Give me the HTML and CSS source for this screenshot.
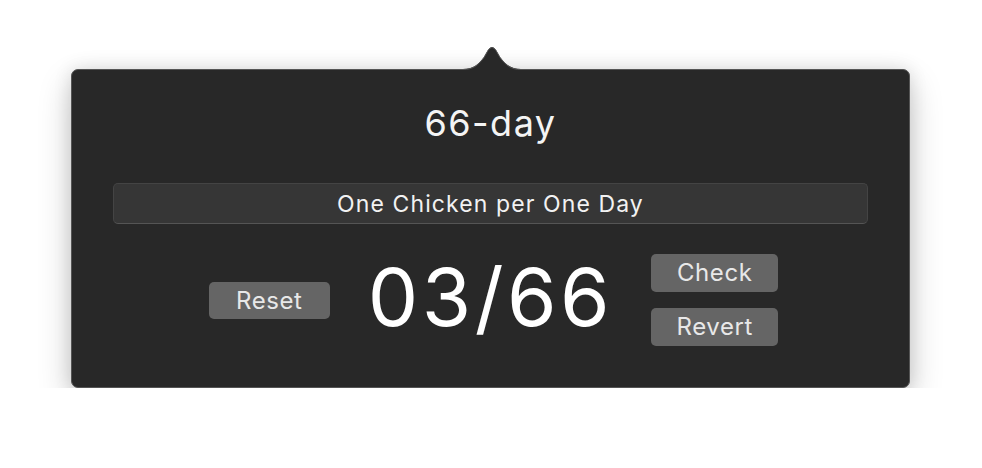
FILE: index.html
```html
<!DOCTYPE html>
<html>
<head>
<meta charset="utf-8">
<link rel="stylesheet" href="styles.css">
</head>
<body>
<div class="popover">
  <svg class="arrow" width="58" height="26" viewBox="0 0 58 26">
    <path class="arrow-fill" d="M0,25 C10,25 15,21 21,13 L25,6 Q29,0 33,6 L37,13 C43,21 48,25 58,25 L58,26 L0,26 Z"/>
    <path class="arrow-line" d="M0,25.5 C10,25.5 15,21.5 21,13.5 L25,6.5 Q29,0.5 33,6.5 L37,13.5 C43,21.5 48,25.5 58,25.5"/>
  </svg>
  <h1 class="title">66-day</h1>
  <div class="field">One Chicken per One Day</div>
  <div class="row">
    <button class="btn btn-reset">Reset</button>
    <div class="count">03/66</div>
    <div class="stack">
      <button class="btn">Check</button>
      <button class="btn">Revert</button>
    </div>
  </div>
</div>
</body>
</html>
```

FILE: styles.css
```css
html, body {
  margin: 0;
  padding: 0;
  background: #ffffff;
}
body {
  font-family: Inter, "Liberation Sans", sans-serif;
  padding: 69px 0 0 71px;
}
.popover {
  position: relative;
  box-sizing: border-box;
  width: 839px;
  height: 319px;
  background: #282828;
  border: 1px solid #555555;
  border-radius: 7px;
  box-shadow: 0 14px 34px rgba(0, 0, 0, 0.2), 0 0 18px rgba(0, 0, 0, 0.12);
  padding: 32px 41px 0 41px;
  display: flex;
  flex-direction: column;
  align-items: stretch;
}
.arrow {
  position: absolute;
  top: -26px;
  left: calc(50% - 28px);
  display: block;
}
.arrow-fill {
  fill: #282828;
}
.arrow-line {
  fill: none;
  stroke: #555555;
  stroke-width: 1;
}
.title {
  margin: 0;
  font-weight: 400;
  font-size: 36px;
  letter-spacing: 1.5px;
  line-height: 42px;
  color: #f4f4f4;
  text-align: center;
}
.field {
  margin-top: 39px;
  box-sizing: border-box;
  height: 41px;
  background: #363636;
  border: 1px solid #444444;
  border-bottom-color: #555555;
  border-radius: 5px;
  color: #f2f2f2;
  font-size: 23px;
  letter-spacing: 1.1px;
  line-height: 40px;
  text-align: center;
}
.row {
  margin-top: 30px;
  height: 92px;
  display: flex;
  align-items: center;
  justify-content: center;
  gap: 38px;
  padding-left: 6px;
}
.btn {
  font-family: Inter, "Liberation Sans", sans-serif;
  width: 127px;
  height: 38px;
  border: none;
  border-radius: 5px;
  background: #656565;
  color: #e8e8e8;
  font-size: 24px;
  letter-spacing: 0.6px;
  line-height: 38px;
  padding: 0;
  text-align: center;
}
.btn-reset {
  width: 121px;
  height: 37px;
}
.count {
  font-size: 80px;
  letter-spacing: 3.5px;
  line-height: 80px;
  color: #ffffff;
  margin-bottom: 7px;
}
.stack {
  display: flex;
  flex-direction: column;
  gap: 16px;
}
```
